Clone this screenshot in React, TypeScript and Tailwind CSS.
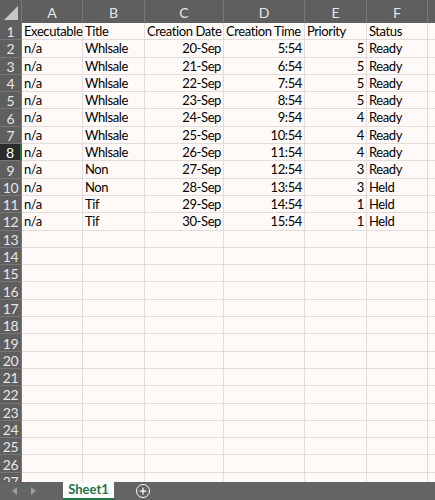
import { Plus } from "lucide-react";

const COLS = [
  { key: "A", w: "w-[61px]" },
  { key: "B", w: "w-[62px]" },
  { key: "C", w: "w-[79px]" },
  { key: "D", w: "w-[81px]" },
  { key: "E", w: "w-[62px]" },
  { key: "F", w: "w-[61px]" },
  { key: "G", w: "w-[60px]" },
];

type Row = { a: string; b: string; c: string; d: string; e: string; f: string };

const DATA: Row[] = [
  { a: "n/a", b: "Whlsale", c: "20-Sep", d: "5:54", e: "5", f: "Ready" },
  { a: "n/a", b: "Whlsale", c: "21-Sep", d: "6:54", e: "5", f: "Ready" },
  { a: "n/a", b: "Whlsale", c: "22-Sep", d: "7:54", e: "5", f: "Ready" },
  { a: "n/a", b: "Whlsale", c: "23-Sep", d: "8:54", e: "5", f: "Ready" },
  { a: "n/a", b: "Whlsale", c: "24-Sep", d: "9:54", e: "4", f: "Ready" },
  { a: "n/a", b: "Whlsale", c: "25-Sep", d: "10:54", e: "4", f: "Ready" },
  { a: "n/a", b: "Whlsale", c: "26-Sep", d: "11:54", e: "4", f: "Ready" },
  { a: "n/a", b: "Non", c: "27-Sep", d: "12:54", e: "3", f: "Ready" },
  { a: "n/a", b: "Non", c: "28-Sep", d: "13:54", e: "3", f: "Held" },
  { a: "n/a", b: "Tif", c: "29-Sep", d: "14:54", e: "1", f: "Held" },
  { a: "n/a", b: "Tif", c: "30-Sep", d: "15:54", e: "1", f: "Held" },
];

const SELECTED_ROW = 8;

function Cell({ w, right, children }: { w: string; right?: boolean; children?: React.ReactNode }) {
  return (
    <div
      className={`${w} shrink-0 h-full border-r border-b border-[#e2dcda] px-[2px] pt-[1px] flex items-center overflow-visible whitespace-nowrap tracking-[-0.4px] ${
        right ? "justify-end" : "justify-start"
      }`}
    >
      {children}
    </div>
  );
}

export default function App() {
  const rows = Array.from({ length: 27 }, (_, i) => i + 1);

  return (
    <div
      className="w-[435px] h-[500px] overflow-hidden flex flex-col bg-[#fffaf8] text-[13px] text-black"
      style={{ fontFamily: "Lato, 'Open Sans', sans-serif" }}
    >
      <div className="flex-1 overflow-hidden">
        {/* column header */}
        <div className="flex h-[23px] bg-[#5f5f5f] text-[#e6e6e6] text-[14px]">
          <div className="w-[22px] shrink-0 h-full relative border-r border-[#777]">
            <svg width="22" height="23" className="absolute inset-0">
              <polygon points="18,6 18,20 4,20" fill="#c8c8c8" />
            </svg>
          </div>
          {COLS.map((c) => (
            <div
              key={c.key}
              className={`${c.w} shrink-0 h-full border-r border-[#777] flex items-center justify-center pt-[2px]`}
            >
              {c.key !== "G" ? c.key : ""}
            </div>
          ))}
        </div>

        {rows.map((r) => {
          const isHeader = r === 1;
          const d = r >= 2 && r <= 12 ? DATA[r - 2] : null;
          const selected = r === SELECTED_ROW;
          return (
            <div key={r} className="flex h-[17.3px]">
              <div
                className={`w-[22px] shrink-0 h-full flex items-center justify-center pt-[1px] border-b border-[#777] text-[14px] tracking-[-0.3px] ${
                  selected
                    ? "bg-[#2b2b2b] text-white border-r-2 border-r-[#217346]"
                    : "bg-[#5f5f5f] text-[#e6e6e6] border-r border-r-[#777]"
                }`}
              >
                {r}
              </div>
              {isHeader ? (
                <>
                  <Cell w={COLS[0].w}>Executable</Cell>
                  <Cell w={COLS[1].w}>Title</Cell>
                  <Cell w={COLS[2].w}>Creation Date</Cell>
                  <Cell w={COLS[3].w}>Creation Time</Cell>
                  <Cell w={COLS[4].w}>Priority</Cell>
                  <Cell w={COLS[5].w}>Status</Cell>
                  <Cell w={COLS[6].w} />
                </>
              ) : d ? (
                <>
                  <Cell w={COLS[0].w}>{d.a}</Cell>
                  <Cell w={COLS[1].w}>{d.b}</Cell>
                  <Cell w={COLS[2].w} right>{d.c}</Cell>
                  <Cell w={COLS[3].w} right>{d.d}</Cell>
                  <Cell w={COLS[4].w} right>{d.e}</Cell>
                  <Cell w={COLS[5].w}>{d.f}</Cell>
                  <Cell w={COLS[6].w} />
                </>
              ) : (
                COLS.map((c) => <Cell key={c.key} w={c.w} />)
              )}
            </div>
          );
        })}
      </div>

      {/* sheet tabs */}
      <div className="h-[18px] shrink-0 bg-[#646464] flex items-stretch">
        <div className="w-[63px] flex items-center gap-[14px] pl-[12px]">
          <svg width="5" height="8" viewBox="0 0 5 8">
            <polygon points="5,0 5,8 0,4" fill="#9a9a9a" />
          </svg>
          <svg width="5" height="8" viewBox="0 0 5 8">
            <polygon points="0,0 0,8 5,4" fill="#9a9a9a" />
          </svg>
        </div>
        <div className="w-[51px] bg-white flex items-center justify-center font-bold text-[#217346] text-[13px] border-b-2 border-[#217346]">
          Sheet1
        </div>
        <div className="w-[58px] flex items-center justify-center">
          <div className="w-[14px] h-[14px] rounded-full border-[1.5px] border-white flex items-center justify-center">
            <Plus size={10} color="white" strokeWidth={3} />
          </div>
        </div>
      </div>
    </div>
  );
}
